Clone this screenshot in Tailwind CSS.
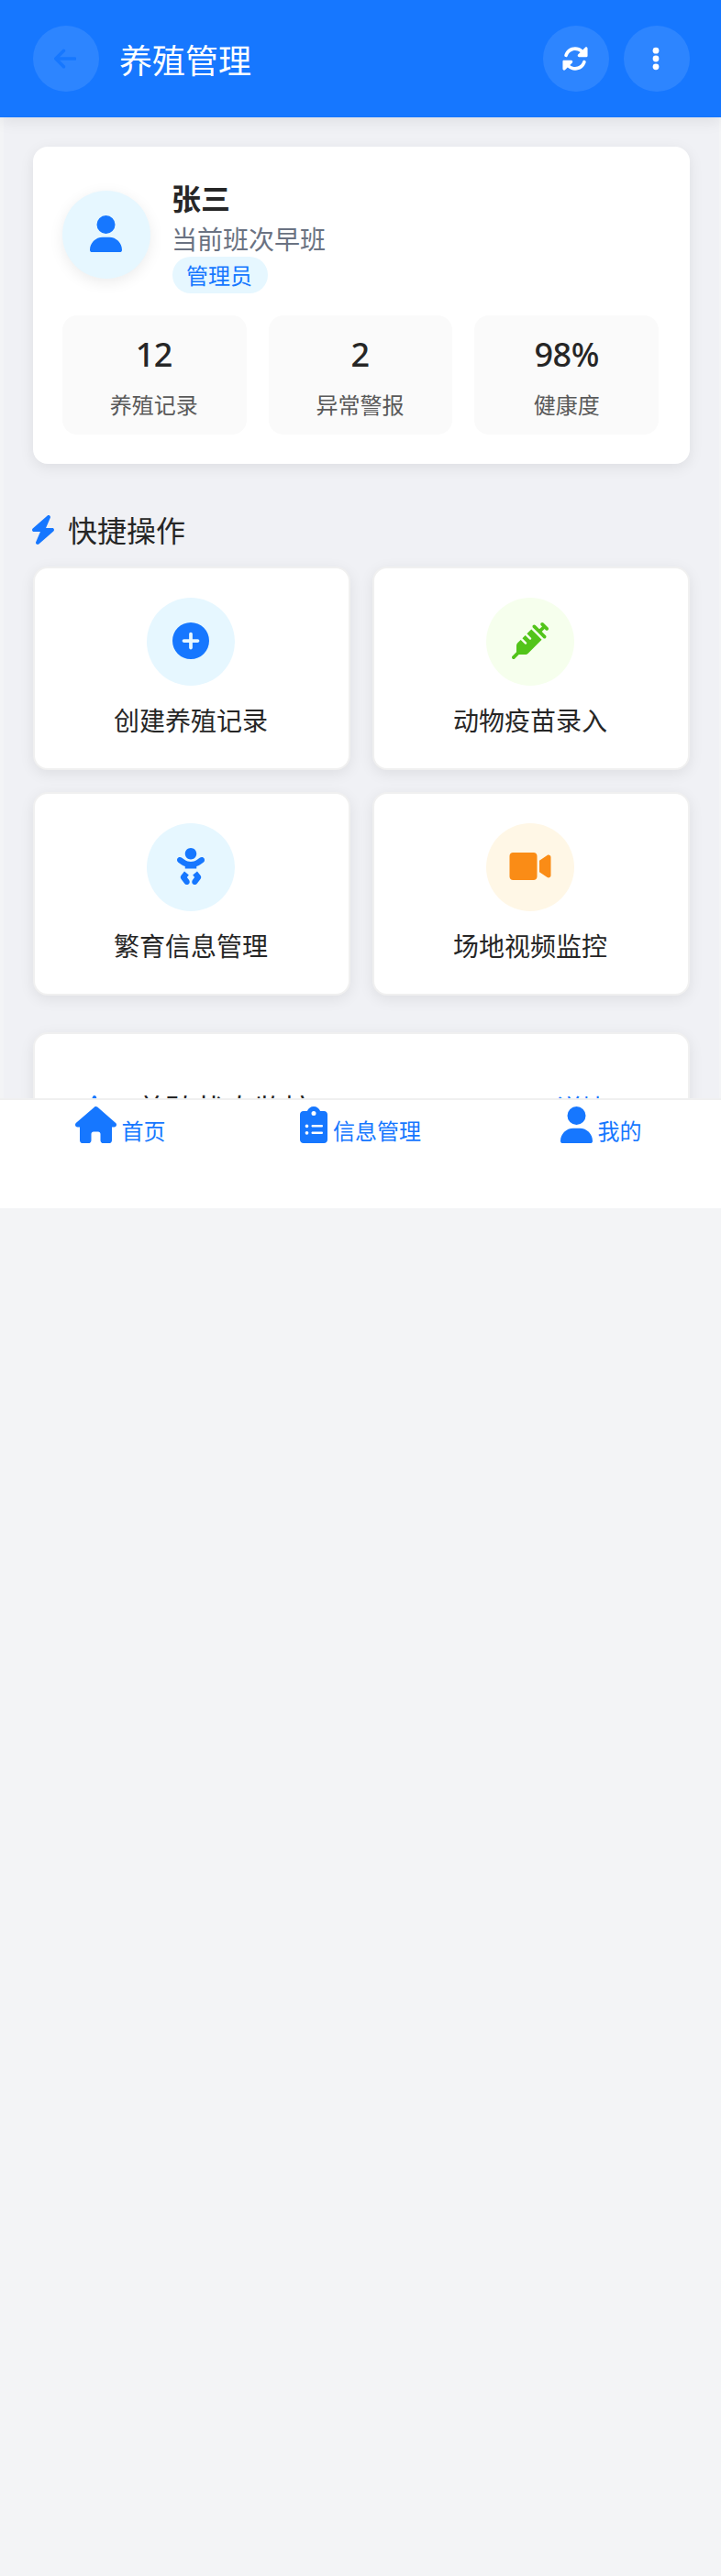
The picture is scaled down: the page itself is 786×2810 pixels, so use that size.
<!DOCTYPE html>
<html lang="zh-CN">
<head>
<meta charset="utf-8">
<title>养殖管理</title>
<script src="https://cdn.jsdelivr.net/npm/@tailwindcss/browser@4"></script>
</head>
<body class="bg-[#f3f4f6] font-['Noto_Sans_CJK_SC',sans-serif] text-[#262626] font-normal">
<svg class="hidden">
  <symbol id="user" viewBox="0 0 448 512"><path d="M224 256A128 128 0 1 0 224 0a128 128 0 1 0 0 256zm-45.7 48C79.8 304 0 383.8 0 482.3C0 498.7 13.3 512 29.7 512H418.3c16.4 0 29.7-13.3 29.7-29.7C448 383.8 368.2 304 269.7 304H178.3z"/></symbol>
</svg>
<div class="relative h-[1318px] w-[786px] overflow-hidden">
  <header class="relative z-10 flex h-32 items-center bg-[#1677ff] pl-9 pr-[34px] shadow-[0_4px_16px_rgba(0,0,0,0.08)]">
    <div class="flex size-18 items-center justify-center rounded-full bg-white/10 pb-px pr-0.5 text-[#1677ff]">
      <svg class="h-7 w-[24.5px]" viewBox="0 0 448 512" fill="currentColor"><path d="M9.4 233.4c-12.5 12.5-12.5 32.8 0 45.3l160 160c12.5 12.5 32.8 12.5 45.3 0s12.5-32.8 0-45.3L109.2 288 416 288c17.7 0 32-14.3 32-32s-14.3-32-32-32l-306.7 0L214.6 118.6c12.5-12.5 12.5-32.8 0-45.3s-32.8-12.5-45.3 0l-160 160z"/></svg>
    </div>
    <h1 class="ml-[22px] flex-1 text-4xl leading-[54px]">
      <span class="text-white">养殖管理</span>
    </h1>
    <div class="flex gap-4 text-white">
      <div class="flex size-18 items-center justify-center rounded-full bg-white/10 pb-px pr-0.5">
        <svg class="size-7" viewBox="8 8 496 496" fill="currentColor"><path d="M449.9 39.96l-48.5 48.53C362.5 53.19 311.4 32 256 32C161.5 32 78.59 92.34 49.58 182.2c-5.438 16.81 3.797 34.88 20.61 40.28c16.97 5.5 34.86-3.812 40.3-20.59C130.9 138.5 189.4 96 256 96c37.96 0 73 14.18 100.2 37.8L311.1 178C295.1 194.8 306.8 223.4 330.4 224h146.9C487.7 223.7 496 215.3 496 204.9V59.04C496 34.99 466.9 22.95 449.9 39.96zM441.8 289.6c-16.94-5.438-34.88 3.812-40.3 20.59C381.1 373.5 322.6 416 256 416c-37.96 0-73-14.18-100.2-37.8L200 334C216.9 317.2 205.2 288.6 181.6 288H34.66C24.32 288.3 16 296.7 16 307.1v145.9c0 24.04 29.07 36.08 46.07 19.07l48.5-48.53C149.5 458.8 200.6 480 255.1 480c94.45 0 177.4-60.34 206.4-150.2C467.9 313 458.6 294.1 441.8 289.6z"/></svg>
      </div>
      <div class="flex size-18 items-center justify-center rounded-full bg-white/10 pb-px pr-0.5">
        <svg class="h-7 w-[8px]" viewBox="0 0 128 512" fill="currentColor"><circle cx="64" cy="94" r="62"/><circle cx="64" cy="256" r="62"/><circle cx="64" cy="418" r="62"/></svg>
      </div>
    </div>
  </header>

  <main class="ml-1 w-[780px] bg-[#f0f1f5] px-8 pt-8">
    <section class="h-[346px] rounded-2xl bg-white p-8 shadow-[0_4px_16px_rgba(0,0,0,0.08)]">
      <div class="flex items-center gap-6">
        <div class="flex size-24 items-center justify-center rounded-full bg-[#e6f7ff] pb-0.5 pr-px text-[#1677ff] shadow-[0_4px_16px_rgba(0,0,0,0.08)]">
          <svg class="h-10 w-[35px]" fill="currentColor"><use href="#user"/></svg>
        </div>
        <div class="flex flex-col items-start">
          <div class="-ml-px h-12 text-[32px] font-bold leading-[46px]">张三</div>
          <div class="-ml-px h-10 text-[28px] leading-10 text-gray-500">当前班次早班</div>
          <div class="h-10 rounded-full bg-[#e6f7ff] pl-[15px] pr-[17px] text-2xl leading-10 text-[#1677ff]">管理员</div>
        </div>
      </div>
      <div class="mt-6 grid w-[650px] grid-cols-3 gap-6 text-center">
        <div class="h-[130px] rounded-2xl bg-[#fafafa] pr-px pt-4">
          <div class="h-[54px] font-['Noto_Sans',sans-serif] text-4xl font-medium leading-[54px] tracking-[-0.5px]">12</div>
          <div class="mt-2 text-2xl leading-[38px] text-[#595959]">养殖记录</div>
        </div>
        <div class="h-[130px] rounded-2xl bg-[#fafafa] pr-px pt-4">
          <div class="h-[54px] font-['Noto_Sans',sans-serif] text-4xl font-medium leading-[54px] tracking-[-0.5px]">2</div>
          <div class="mt-2 text-2xl leading-[38px] text-[#595959]">异常警报</div>
        </div>
        <div class="h-[130px] rounded-2xl bg-[#fafafa] pt-4">
          <div class="h-[54px] font-['Noto_Sans',sans-serif] text-4xl font-medium leading-[54px] tracking-[-0.5px]">98%</div>
          <div class="mt-2 text-2xl leading-[38px] text-[#595959]">健康度</div>
        </div>
      </div>
    </section>

    <h2 class="mt-12 flex h-12 items-center gap-[15px] text-[32px]">
      <svg class="-ml-px h-8 w-6 text-[#1677ff]" viewBox="0 0 384 512" fill="currentColor"><path d="M240.5 224H352C365.3 224 377.3 232.3 381.1 244.7C386.6 257.2 383.1 271.3 373.1 280.1L117.1 504.1C105.8 513.9 89.27 514.7 77.19 505.9C65.1 497.1 60.7 481.1 66.59 467.4L143.5 288H31.1C18.67 288 6.733 279.7 2.044 267.3C-2.645 254.8 .8944 240.7 10.93 231.9L266.9 7.918C278.2-1.92 294.7-2.669 306.8 6.114C318.9 14.9 323.3 30.87 317.4 44.56L240.5 224z"/></svg>
      <span class="pb-0.5 leading-[46px]">快捷操作</span>
    </h2>

    <section class="mt-4 grid grid-cols-2 gap-6 text-[28px]">
      <div class="flex h-[222px] flex-col items-center rounded-2xl border-2 border-[#f0f0f0] bg-white pr-0.5 pt-8 shadow-[0_4px_16px_rgba(0,0,0,0.08)]">
        <div class="flex size-24 items-center justify-center rounded-full bg-[#e6f7ff] pb-0.5 text-[#1677ff]">
          <svg class="size-10" viewBox="0 0 512 512" fill="currentColor"><path d="M256 512A256 256 0 1 0 256 0a256 256 0 1 0 0 512zM232 352V280H160c-13.3 0-24-10.7-24-24s10.7-24 24-24h72V160c0-13.3 10.7-24 24-24s24 10.7 24 24v72h72c13.3 0 24 10.7 24 24s-10.7 24-24 24H280v72c0 13.3-10.7 24-24 24s-24-10.7-24-24z"/></svg>
        </div>
        <div class="mt-4 leading-[42px]">创建养殖记录</div>
      </div>
      <div class="flex h-[222px] flex-col items-center rounded-2xl border-2 border-[#f0f0f0] bg-white pr-0.5 pt-8 shadow-[0_4px_16px_rgba(0,0,0,0.08)]">
        <div class="flex size-24 items-center justify-center rounded-full bg-[#f6ffed] pb-0.5 text-[#52c41a]">
          <svg class="size-10" viewBox="0 0 512 512" fill="currentColor"><path d="M441 7l32 32 32 32c9.4 9.4 9.4 24.6 0 33.9s-24.6 9.4-33.9 0l-15-15L417.9 128l55 55c9.4 9.4 9.4 24.6 0 33.9s-24.6 9.4-33.9 0l-72-72L295 73c-9.4-9.4-9.4-24.6 0-33.9s24.6-9.4 33.9 0l55 55L422.1 56 407 41c-9.4-9.4-9.4-24.6 0-33.9s24.6-9.4 33.9 0zM210.3 155.7l61.1-61.1c.3 .3 .6 .7 1 1l16 16 56 56 56 56 16 16c.3 .3 .6 .6 1 1l-191 191c-10.5 10.5-24.7 16.4-39.6 16.4H97.9L41 505c-9.4 9.4-24.6 9.4-33.9 0s-9.4-24.6 0-33.9l57-57V325.3c0-14.9 5.9-29.1 16.4-39.6l43.3-43.3 57 57c6.2 6.2 16.4 6.2 22.6 0s6.2-16.4 0-22.6l-57-57 41.4-41.4 57 57c6.2 6.2 16.4 6.2 22.6 0s6.2-16.4 0-22.6l-57-57z"/></svg>
        </div>
        <div class="mt-4 leading-[42px]">动物疫苗录入</div>
      </div>
      <div class="flex h-[222px] flex-col items-center rounded-2xl border-2 border-[#f0f0f0] bg-white pr-0.5 pt-8 shadow-[0_4px_16px_rgba(0,0,0,0.08)]">
        <div class="flex size-24 items-center justify-center rounded-full bg-[#e6f7ff] pb-0.5 text-[#1677ff]">
          <svg class="h-10 w-[30px]" viewBox="0 0 384 512" fill="currentColor"><path d="M192 160c44.2 0 80-35.8 80-80S236.2 0 192 0s-80 35.8-80 80 35.8 80 80 80zm-53.4 248.8l25.6-32-61.5-51.2L56.8 383c-11.4 14.2-11.7 34.4-.8 49l48 64c7.9 10.5 19.9 16 32 16 8.3 0 16.8-2.6 24-8 17.7-13.2 21.2-38.3 8-56l-29.4-39.2zm142.7-83.2l-61.5 51.2 25.6 32L216 448c-13.2 17.7-9.7 42.8 8 56 7.2 5.4 15.6 8 24 8 12.2 0 24.2-5.5 32-16l48-64c10.9-14.6 10.6-34.8-.8-49l-45.9-57.4zM376.7 145c-12.7-18.1-37.6-22.4-55.7-9.8l-40.6 28.5c-52.7 37-124.2 37-176.8 0L63 135.3C44.9 122.6 20 127 7.3 145-5.4 163.1-1 188 17 200.7l40.6 28.5c17 11.9 35.4 20.9 54.4 27.9V288h160v-30.8c19-7 37.4-16 54.4-27.9l40.6-28.5c18.1-12.8 22.4-37.7 9.7-55.8z"/></svg>
        </div>
        <div class="mt-4 leading-[42px]">繁育信息管理</div>
      </div>
      <div class="flex h-[222px] flex-col items-center rounded-2xl border-2 border-[#f0f0f0] bg-white pr-0.5 pt-8 shadow-[0_4px_16px_rgba(0,0,0,0.08)]">
        <div class="flex size-24 items-center justify-center rounded-full bg-[#fff7e6] pb-0.5 text-[#fa8c16]">
          <svg class="h-10 w-[46px]" viewBox="0 0 576 512" fill="currentColor"><path d="M336.2 64H47.8C21.4 64 0 85.4 0 111.8v288.4C0 426.6 21.4 448 47.8 448h288.4c26.4 0 47.8-21.4 47.8-47.8V111.8c0-26.4-21.4-47.8-47.8-47.8zm189.4 37.7L416 177.3v157.4l109.6 75.5c21.2 14.6 50.4-.3 50.4-25.8V127.5c0-25.4-29.1-40.4-50.4-25.8z"/></svg>
        </div>
        <div class="mt-4 leading-[42px]">场地视频监控</div>
      </div>
    </section>

    <section class="mt-10 h-[400px] rounded-2xl border-2 border-[#f0f0f0] bg-white pl-12 pr-[88px] pt-14 shadow-[0_4px_16px_rgba(0,0,0,0.08)]">
      <div class="flex h-12 items-center">
        <svg class="h-8 w-9 text-[#1677ff]" viewBox="0 0 36 32" fill="none" stroke="currentColor" stroke-width="4" stroke-linecap="round" stroke-linejoin="round"><path d="M2 20h8l7-15 6 24 5-9h6"/></svg>
        <span class="ml-[27px] flex-1 text-[32px] leading-[48px]">养殖状态监控</span>
        <span class="text-[28px] leading-[42px] text-[#1677ff]">详情</span>
      </div>
    </section>
  </main>

  <nav class="absolute inset-x-0 bottom-0 z-20 grid h-[120px] grid-cols-3 border-t-2 border-[#f0f0f0] bg-white pt-[7px] text-2xl text-[#1677ff]">
    <div class="flex items-start justify-center gap-1.5">
      <svg class="h-10 w-[45px]" viewBox="0 0 576 512" fill="currentColor"><path d="M575.8 255.5c0 18-15 32.1-32 32.1h-32l.7 160.2c0 2.7-.2 5.4-.5 8.1V472c0 22.1-17.9 40-40 40H456c-1.1 0-2.2 0-3.3-.1c-1.4 .1-2.8 .1-4.2 .1H416 392c-22.1 0-40-17.9-40-40V448 384c0-17.7-14.3-32-32-32H256c-17.7 0-32 14.3-32 32v64 24c0 22.1-17.9 40-40 40H160 128.1c-1.5 0-3-.1-4.5-.2c-1.2 .1-2.4 .2-3.6 .2H104c-22.1 0-40-17.9-40-40V360c0-.9 0-1.9 .1-2.8V287.6H32c-18 0-32-14-32-32.1c0-9 3-17 10-24L266.4 8c7-7 15-8 22-8s15 2 21 7L564.8 231.5c8 7 12 15 11 24z"/></svg>
      <span class="mt-2 leading-9">首页</span>
    </div>
    <div class="flex items-start justify-center gap-1.5">
      <svg class="h-10 w-[30px]" viewBox="0 0 384 512" fill="currentColor"><path d="M192 0c-41.8 0-77.4 26.7-90.5 64H48C21.5 64 0 85.5 0 112V464c0 26.5 21.5 48 48 48H336c26.5 0 48-21.5 48-48V112c0-26.5-21.5-48-48-48H282.5C269.4 26.7 233.8 0 192 0zm0 64a32 32 0 1 1 0 64 32 32 0 1 1 0-64zM72 272a24 24 0 1 1 48 0 24 24 0 1 1 -48 0zm104-16H304c8.8 0 16 7.2 16 16s-7.2 16-16 16H176c-8.8 0-16-7.2-16-16s7.2-16 16-16zM72 368a24 24 0 1 1 48 0 24 24 0 1 1 -48 0zm88 0c0-8.8 7.2-16 16-16H304c8.8 0 16 7.2 16 16s-7.2 16-16 16H176c-8.8 0-16-7.2-16-16z"/></svg>
      <span class="mt-2 leading-9">信息管理</span>
    </div>
    <div class="flex items-start justify-center gap-1.5">
      <svg class="h-10 w-[35px]" fill="currentColor"><use href="#user"/></svg>
      <span class="mt-2 leading-9">我的</span>
    </div>
  </nav>
</div>
</body>
</html>
